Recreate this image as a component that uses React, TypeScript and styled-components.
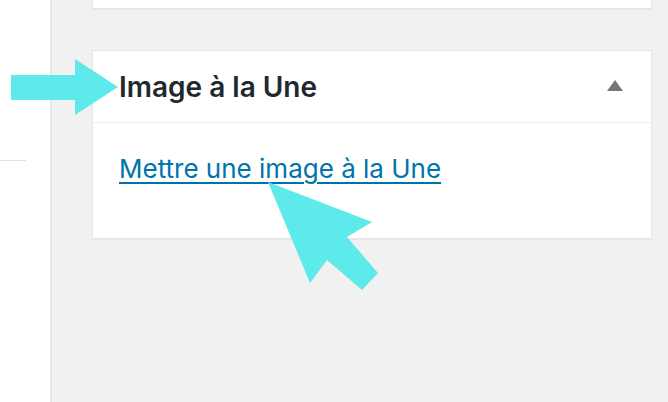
import React from 'react'
import styled, { createGlobalStyle } from 'styled-components'

const Global = createGlobalStyle`
  html, body { margin: 0; padding: 0; }
  body { font-family: Inter, "Open Sans", "Liberation Sans", sans-serif; background: #fff; overflow: hidden; }
`

const App = () => {
  return (
    <>
      <Global />
      <Page>
        <Side>
          <SideRule />
        </Side>
        <Main>
          <PrevBox />
          <Postbox>
            <BoxHeader>
              <Title>Image à la Une</Title>
              <Toggle aria-label="toggle" />
            </BoxHeader>
            <BoxBody>
              <SetLink href="#">Mettre une image à la Une</SetLink>
            </BoxBody>
          </Postbox>
        </Main>

        <Pointer width="122" height="60" viewBox="0 0 122 60" style={{ left: 0, top: 58 }}>
          <polygon points="11,17 75,17 75,1 118,29 75,57 75,42 11,42" fill="#5eeaea" />
        </Pointer>
        <Pointer width="130" height="130" viewBox="260 175 130 130" style={{ left: 260, top: 175 }}>
          <polygon
            points="268,182 372,222 347,237 378,273 362,290 327,260 310,283"
            fill="#5eeaea"
          />
        </Pointer>
      </Page>
    </>
  )
}

export default App

const Page = styled.div`
  position: relative;
  display: flex;
  width: 668px;
  height: 402px;
  overflow: hidden;
`
const Side = styled.div`
  flex-shrink: 0;
  background: #fff;
  border-right: 2px solid #e6e6e6;
  padding-top: 160px;
  box-sizing: border-box;
  width: 52px;
`
const SideRule = styled.div`
  width: 26px;
  height: 1px;
  background: #e2e2e2;
`
const Main = styled.div`
  flex: 1;
  background: #f1f1f1;
  padding: 0 16px 0 40px;
  display: flex;
  flex-direction: column;
`
const PrevBox = styled.div`
  height: 8px;
  background: #fff;
  border: 1px solid #e5e5e5;
  border-top: none;
  box-shadow: 0 1px 1px rgba(0, 0, 0, 0.04);
  margin-bottom: 41px;
`
const Postbox = styled.div`
  background: #fff;
  border: 1px solid #e5e5e5;
  box-shadow: 0 1px 1px rgba(0, 0, 0, 0.04);
`
const BoxHeader = styled.div`
  height: 71px;
  display: flex;
  align-items: center;
  justify-content: space-between;
  padding: 0 28px 0 26px;
  border-bottom: 1px solid #eeeeee;
`
const Title = styled.h2`
  margin: 0;
  font-size: 28px;
  font-weight: 600;
  color: #23282d;
  letter-spacing: 0;
`
const Toggle = styled.span`
  width: 0;
  height: 0;
  border-left: 8px solid transparent;
  border-right: 8px solid transparent;
  border-bottom: 11px solid #72777c;
  margin-bottom: 2px;
`
const BoxBody = styled.div`
  height: 115px;
  padding: 30px 26px 0;
  box-sizing: border-box;
`
const SetLink = styled.a`
  font-size: 26px;
  color: #0073aa;
  text-decoration: underline;
  text-underline-offset: 4px;
  text-decoration-thickness: 2px;
`
const Pointer = styled.svg`
  position: absolute;
  pointer-events: none;
`
